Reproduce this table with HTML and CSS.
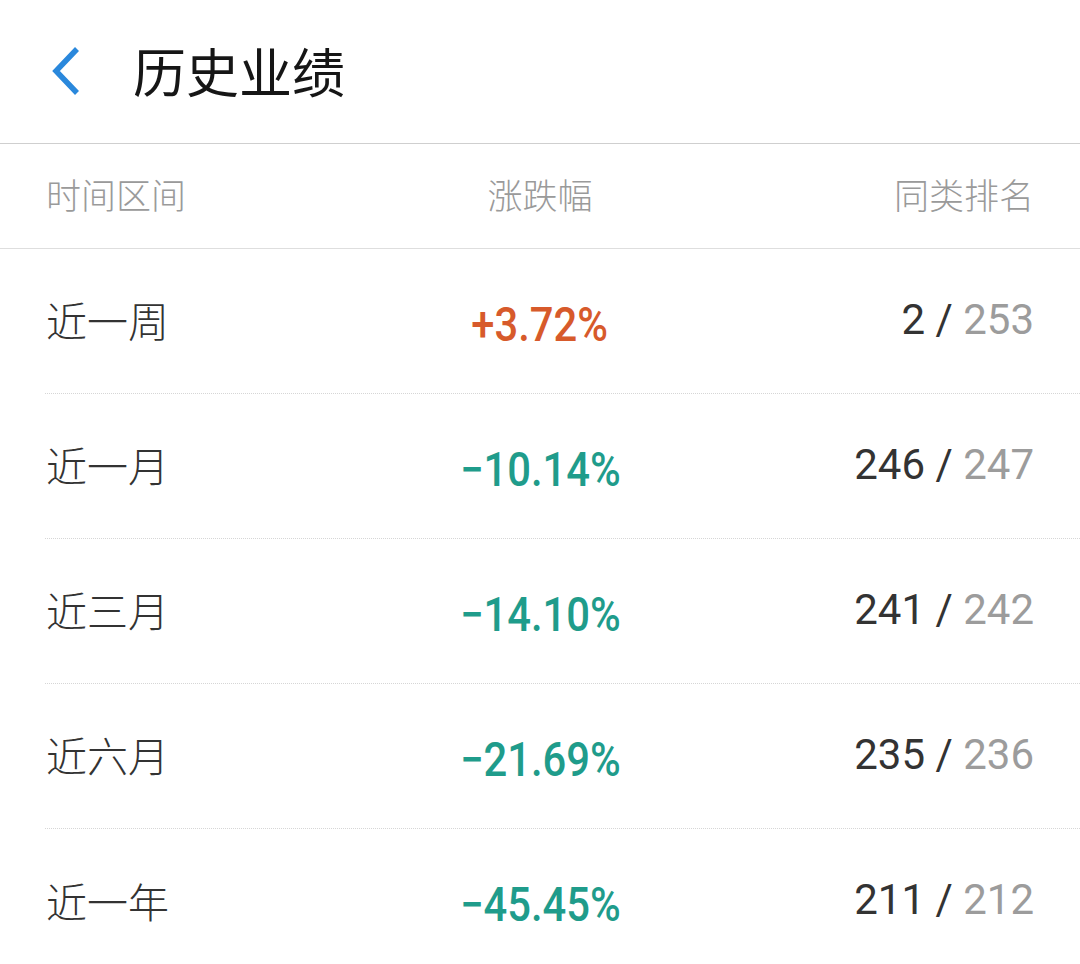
FILE: index.html
```html
<!DOCTYPE html>
<html lang="zh-CN">
<head>
<meta charset="utf-8">
<title>历史业绩</title>
<link rel="stylesheet" href="styles.css">
</head>
<body>
<header class="topbar">
  <svg class="back" width="40" height="52" viewBox="0 0 40 52" aria-hidden="true">
    <path d="M31 4 L10 26 L31 48" fill="none" stroke="#2a88dc" stroke-width="5.5" stroke-linecap="butt" stroke-linejoin="miter"/>
  </svg>
  <h1 class="title">历史业绩</h1>
</header>
<div class="thead">
  <div class="c-left">时间区间</div>
  <div class="c-mid">涨跌幅</div>
  <div class="c-right">同类排名</div>
</div>
<div class="tbody">
  <div class="row">
    <div class="c-left label">近一周</div>
    <div class="c-mid"><span class="pct up">+3.72%</span></div>
    <div class="c-right rank"><span class="rk">2 / </span><span class="tot">253</span></div>
  </div>
  <div class="row">
    <div class="c-left label">近一月</div>
    <div class="c-mid"><span class="pct down">−10.14%</span></div>
    <div class="c-right rank"><span class="rk">246 / </span><span class="tot">247</span></div>
  </div>
  <div class="row">
    <div class="c-left label">近三月</div>
    <div class="c-mid"><span class="pct down">−14.10%</span></div>
    <div class="c-right rank"><span class="rk">241 / </span><span class="tot">242</span></div>
  </div>
  <div class="row">
    <div class="c-left label">近六月</div>
    <div class="c-mid"><span class="pct down">−21.69%</span></div>
    <div class="c-right rank"><span class="rk">235 / </span><span class="tot">236</span></div>
  </div>
  <div class="row last">
    <div class="c-left label">近一年</div>
    <div class="c-mid"><span class="pct down">−45.45%</span></div>
    <div class="c-right rank"><span class="rk">211 / </span><span class="tot">212</span></div>
  </div>
</div>
</body>
</html>
```
FILE: styles.css
```css
* { box-sizing: border-box; }
html, body { margin: 0; padding: 0; background: #fff; }
body {
  width: 1080px;
  height: 964px;
  overflow: hidden;
  font-family: "Noto Sans CJK SC", "Noto Sans", sans-serif;
  color: #333;
}
.topbar {
  height: 144px;
  border-bottom: 1px solid #cfcfcf;
  display: flex;
  align-items: center;
  padding-left: 46px;
  padding-bottom: 2px;
}
.back { display: block; flex: none; }
.title {
  margin: 0 0 0 47px;
  font-size: 53px;
  font-weight: 400;
  color: #161616;
  line-height: 1;
}
.thead {
  height: 105px;
  border-bottom: 1px solid #dedede;
  display: grid;
  grid-template-columns: 1fr 1fr 1fr;
  align-items: center;
  padding: 0 46px 6px 46px;
  font-size: 35px;
  font-weight: 300;
  color: #9a9a9a;
}
.c-left { text-align: left; }
.c-mid { text-align: center; }
.c-right { text-align: right; }
.row {
  height: 145px;
  display: grid;
  grid-template-columns: 1fr 1fr 1fr;
  align-items: center;
  padding: 0 46px 4px 1px;
  margin-left: 45px;
  border-bottom: 1px dotted #d6d6d6;
}
.row.last { border-bottom: none; }
.label { font-size: 41px; font-weight: 300; color: #333; }
.pct {
  display: inline-block;
  font-family: Roboto, "Liberation Sans", sans-serif;
  font-weight: 500;
  font-size: 48px;
  transform: scaleX(0.87);
  transform-origin: center;
  position: relative;
  top: 5px;
}
.up { color: #d75a2b; }
.down { color: #1f9c8b; }
.rank {
  font-family: Roboto, "Liberation Sans", sans-serif;
  font-size: 42px;
  white-space: pre;
}
.rk { color: #333; }
.tot { color: #9c9c9c; }
```
